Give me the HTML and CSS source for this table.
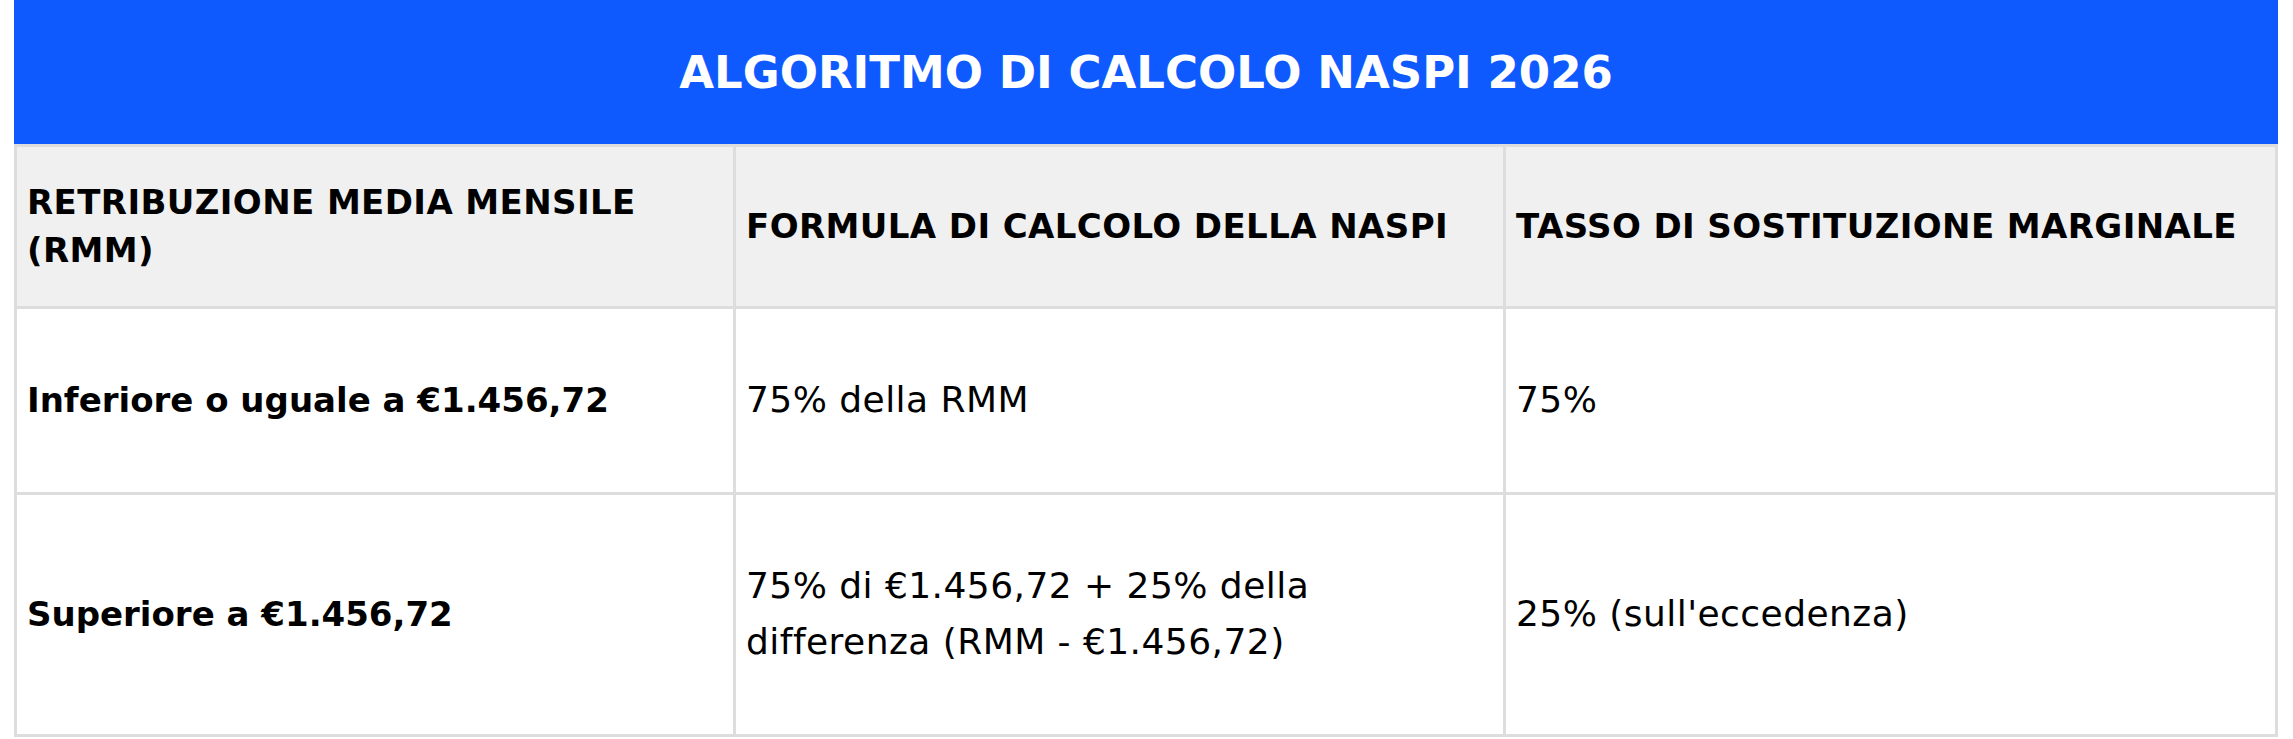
FILE: index.html
```html
<!DOCTYPE html>
<html lang="it">
<head>
<meta charset="utf-8">
<title>Algoritmo di calcolo NASpI 2026</title>
<link rel="stylesheet" href="styles.css">
</head>
<body>
<div class="wrap">
  <div class="title">ALGORITMO DI CALCOLO NASPI 2026</div>
  <table class="naspi">
    <thead>
      <tr>
        <th class="c1">RETRIBUZIONE MEDIA MENSILE<br>(RMM)</th>
        <th class="c2">FORMULA DI CALCOLO DELLA NASPI</th>
        <th class="c3">TASSO DI SOSTITUZIONE MARGINALE</th>
      </tr>
    </thead>
    <tbody>
      <tr>
        <td class="strong">Inferiore o uguale a €1.456,72</td>
        <td>75% della RMM</td>
        <td>75%</td>
      </tr>
      <tr>
        <td class="strong">Superiore a €1.456,72</td>
        <td>75% di €1.456,72 + 25% della<br>differenza (RMM - €1.456,72)</td>
        <td>25% (sull'eccedenza)</td>
      </tr>
    </tbody>
  </table>
</div>
</body>
</html>
```
FILE: styles.css
```css
html, body {
  margin: 0;
  padding: 0;
  background: #ffffff;
}

.wrap {
  padding: 0 15px 0 14px;
  font-family: "DejaVu Sans", "Liberation Sans", sans-serif;
  color: #000000;
}

.title {
  height: 144px;
  background: #0f5aff;
  color: #ffffff;
  font-weight: bold;
  font-size: 45px;
  display: flex;
  align-items: center;
  justify-content: center;
}

.naspi {
  width: 100%;
  table-layout: fixed;
  border-collapse: separate;
  border-spacing: 0;
  border-left: 3px solid #dddddd;
  border-top: 3px solid #dddddd;
}

.naspi th,
.naspi td {
  box-sizing: border-box;
  border-right: 3px solid #dddddd;
  border-bottom: 3px solid #dddddd;
  text-align: left;
  vertical-align: middle;
}

.naspi th {
  background: #f0f0f0;
  font-size: 34px;
  font-weight: bold;
  letter-spacing: 0.4px;
  line-height: 48px;
  padding: 31px 10px 32px 10px;
}

.naspi td {
  background: #ffffff;
  font-size: 36px;
  font-weight: normal;
  letter-spacing: 0.45px;
  line-height: 56px;
  padding: 63px 10px 64px 10px;
}

.naspi td.strong {
  font-weight: bold;
  font-size: 34px;
  letter-spacing: 0;
}

.c1 { width: 719px; }
.c2 { width: 770px; }
.c3 { width: 772px; }
```
